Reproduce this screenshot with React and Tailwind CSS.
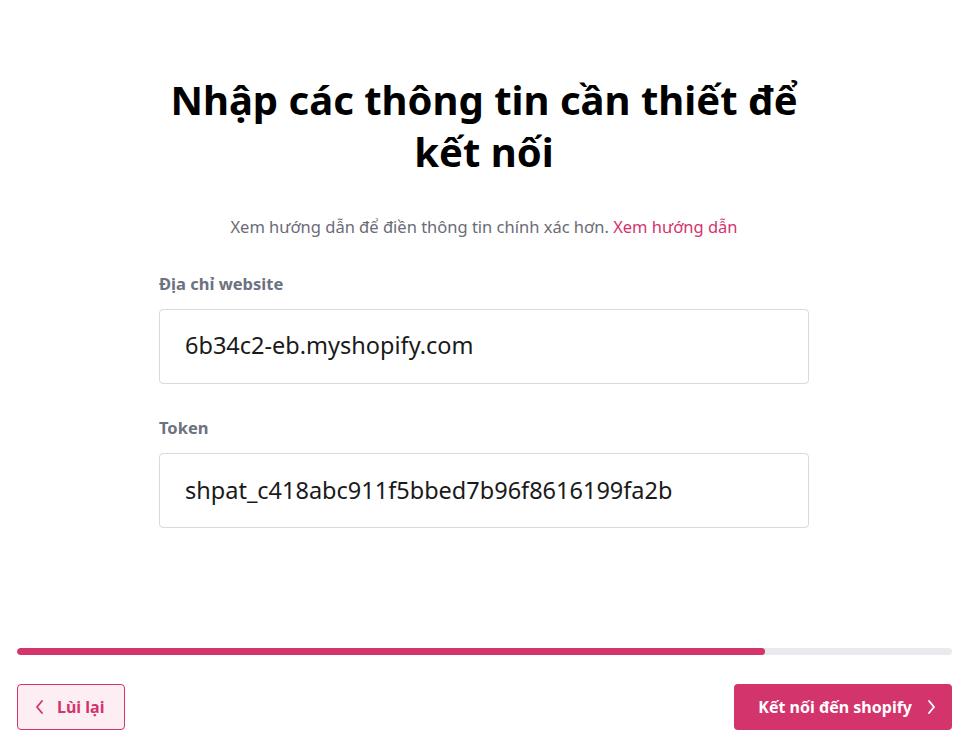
import React from 'react';

const App = () => {
  const progress = 80;

  return (
    <div
      className="w-[971px] h-[744px] bg-white flex flex-col"
      style={{ fontFamily: '"Noto Sans", "Open Sans", sans-serif' }}
    >
      <div className="flex-1 pl-[159px] pt-[74px]">
        <div className="w-[650px] flex flex-col">
          <h1 className="text-[40px] leading-[52px] font-bold text-black text-center">
            Nhập các thông tin cần thiết để kết nối
          </h1>
          <p className="mt-[37px] text-[16.5px] text-[#6b6b76] text-center">
            Xem hướng dẫn để điền thông tin chính xác hơn.{' '}
            <a className="text-[#d3346c]">Xem hướng dẫn</a>
          </p>

          <label className="mt-[32px] text-[16.5px] font-bold text-[#6b7280]">Địa chỉ website</label>
          <div className="mt-[12px] h-[75px] border border-[#d9d9de] rounded-[4px] flex items-center px-[25px] text-[23.5px] text-[#1a1a1a]">
            6b34c2-eb.myshopify.com
          </div>

          <label className="mt-[32px] text-[16.5px] font-bold text-[#6b7280]">Token</label>
          <div className="mt-[13px] h-[75px] border border-[#d9d9de] rounded-[4px] flex items-center px-[25px] text-[23.5px] text-[#1a1a1a]">
            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
          </div>
        </div>
      </div>

      <div className="pl-[17px] pr-[19px] pb-[14px]">
        <div className="h-[7px] rounded-full bg-[#e8eaed] overflow-hidden">
          <div className="h-full rounded-full bg-[#d3346c]" style={{ width: `${progress}%` }} />
        </div>
        <div className="mt-[29px] flex justify-between">
          <button className="h-[46px] pl-[14px] pr-[20px] flex items-center gap-[9px] rounded-[4px] border border-[#d3346c] bg-[#fdeef4] text-[#d3346c] text-[16px] font-bold">
            <svg width="16" height="16" viewBox="0 0 24 24" fill="none" stroke="currentColor" strokeWidth="2.8" strokeLinecap="round" strokeLinejoin="round">
              <path d="M15 3l-7.5 9 7.5 9" />
            </svg>
            Lùi lại
          </button>
          <button className="h-[46px] pl-[24px] pr-[13px] flex items-center gap-[11px] rounded-[4px] bg-[#d3346c] text-white text-[16px] font-bold">
            Kết nối đến shopify
            <svg width="16" height="16" viewBox="0 0 24 24" fill="none" stroke="currentColor" strokeWidth="2.8" strokeLinecap="round" strokeLinejoin="round">
              <path d="M9 3l7.5 9-7.5 9" />
            </svg>
          </button>
        </div>
      </div>
    </div>
  );
};

export default App;
